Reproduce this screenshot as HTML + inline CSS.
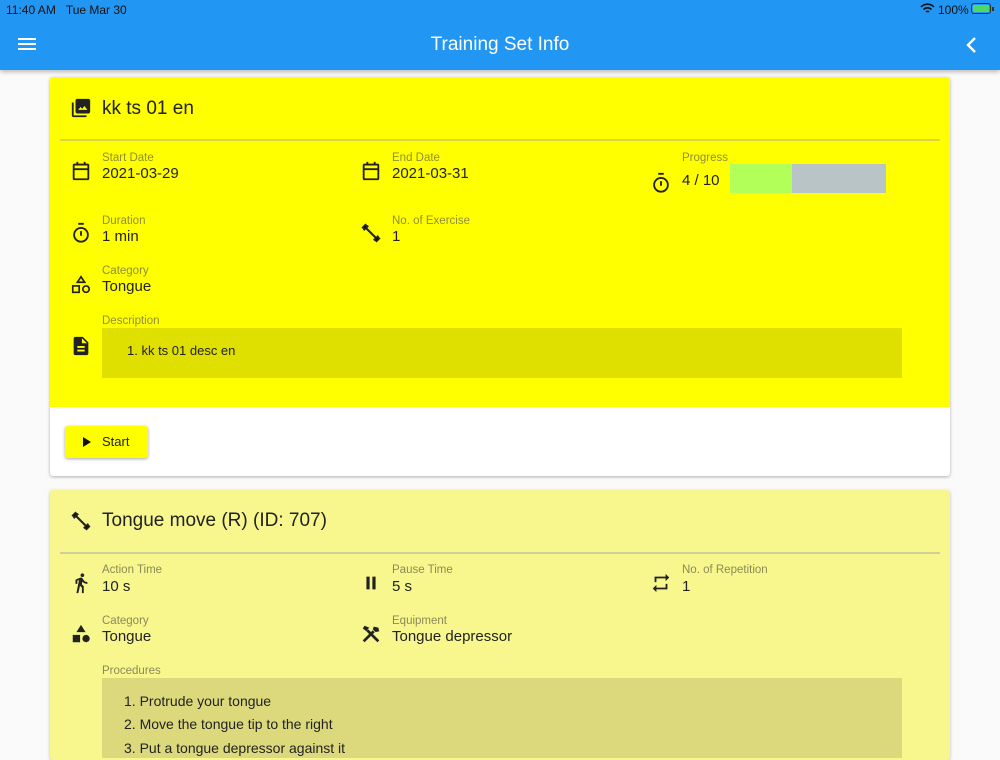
<!DOCTYPE html>
<html><head><meta charset="utf-8"><style>
*{margin:0;padding:0;box-sizing:border-box}
body{width:1000px;height:750px;overflow:hidden;background:#fafafa;font-family:"Liberation Sans",sans-serif;position:relative;color:#222}
.abs{position:absolute}
.bar{left:0;top:0;width:1000px;height:70px;background:#2196f3;box-shadow:0 2px 4px rgba(0,0,0,.25)}
.lbl{position:absolute;font-size:11.5px;color:#8f8f35;white-space:nowrap}
.lbl2{color:#8a8a58}
.val{position:absolute;font-size:15px;color:#222;white-space:nowrap}
svg.ic{position:absolute;width:22px;height:22px}
</style></head><body>
<div class="abs bar"></div>
<div class="abs" style="left:6px;top:3px;font-size:12px;color:#111">11:40 AM&nbsp;&nbsp;&nbsp;Tue Mar 30</div>
<div class="abs" style="left:938px;top:3px;font-size:12px;color:#111">100%</div>
<svg class="abs" style="left:920px;top:3px" width="15" height="12" viewBox="0 0 15 12"><path d="M1 4a9 9 0 0 1 13 0M3.5 6.5a5.5 5.5 0 0 1 8 0M6 9a2 2 0 0 1 3 0" stroke="#111" stroke-width="1.6" fill="none"/></svg>
<div class="abs" style="left:971px;top:3px;width:20px;height:11px;border:1px solid #333;border-radius:3px;padding:1px"><div style="width:100%;height:100%;background:#4cd964;border-radius:1px"></div></div>
<div class="abs" style="left:992px;top:7px;width:2px;height:4px;background:#333"></div>
<svg class="abs" style="left:18px;top:37px" width="18" height="14"><path d="M0 2h18M0 7h18M0 12h18" stroke="#fff" stroke-width="2"/></svg>
<div class="abs" style="left:0;width:1000px;top:34px;text-align:center;color:#fff;font-size:19px">Training Set Info</div>
<svg class="abs" style="left:964px;top:36px" width="14" height="18"><path d="M11 2L4 9l7 7" stroke="#fff" stroke-width="2.4" fill="none"/></svg>

<div class="abs" style="left:50px;top:77px;width:900px;height:399px;background:#fff;border-radius:3px;box-shadow:0 1px 3px rgba(0,0,0,.3);overflow:hidden">
<div class="abs" style="left:0;top:0;width:900px;height:330px;background:#ffff00"></div>
<div class="abs" style="left:10px;top:62px;width:880px;height:2px;background:#d6d64a"></div>
</div>
<svg class="ic" style="left:70px;top:97px" viewBox="0 0 24 24"><path d="M4 6H2v14c0 1.1.9 2 2 2h14v-2H4V6zm16-4H8c-1.1 0-2 .9-2 2v12c0 1.1.9 2 2 2h12c1.1 0 2-.9 2-2V4c0-1.1-.9-2-2-2zm-1 12H9l2.5-3.2 1.8 2.2 2.5-3.2L19 14z" fill="#222"/></svg>
<div class="val" style="left:102px;top:98px;font-size:19px">kk ts 01 en</div>

<svg class="ic" style="left:70px;top:160px" viewBox="0 0 24 24"><rect x="4" y="5" width="16" height="16" rx="1" stroke="#222" stroke-width="2" fill="none"/><path d="M4 10h16M8 2v4M16 2v4" stroke="#222" stroke-width="2"/></svg>
<div class="lbl" style="left:102px;top:152px">Start Date</div><div class="val" style="left:102px;top:165px">2021-03-29</div>
<svg class="ic" style="left:360px;top:160px" viewBox="0 0 24 24"><rect x="4" y="5" width="16" height="16" rx="1" stroke="#222" stroke-width="2" fill="none"/><path d="M4 10h16M8 2v4M16 2v4" stroke="#222" stroke-width="2"/></svg>
<div class="lbl" style="left:392px;top:152px">End Date</div><div class="val" style="left:392px;top:165px">2021-03-31</div>
<svg class="ic" style="left:650px;top:172px" viewBox="0 0 24 24"><circle cx="12" cy="14" r="7.5" stroke="#222" stroke-width="2" fill="none"/><path d="M9 2h6M12 10v5" stroke="#222" stroke-width="2"/></svg>
<div class="lbl" style="left:682px;top:152px">Progress</div><div class="val" style="left:682px;top:172px">4 / 10</div>
<div class="abs" style="left:730px;top:164px;width:62px;height:29px;background:#b2ff59"></div>
<div class="abs" style="left:792px;top:164px;width:94px;height:29px;background:#b8c4c6"></div>

<svg class="ic" style="left:70px;top:222px" viewBox="0 0 24 24"><circle cx="12" cy="14" r="7.5" stroke="#222" stroke-width="2" fill="none"/><path d="M9 2h6M12 10v5" stroke="#222" stroke-width="2"/></svg>
<div class="lbl" style="left:102px;top:215px">Duration</div><div class="val" style="left:102px;top:228px">1 min</div>
<svg class="ic" style="left:360px;top:222px" viewBox="0 0 24 24"><path d="M6 6l12 12" stroke="#222" stroke-width="2.2"/><path d="M3 6l3-3 2 2-3 3zM16 19l3-3 2 2-3 3zM4 9l5-5M15 20l5-5" stroke="#222" stroke-width="2"/></svg>
<div class="lbl" style="left:392px;top:215px">No. of Exercise</div><div class="val" style="left:392px;top:228px">1</div>

<svg class="ic" style="left:70px;top:274px" viewBox="0 0 24 24"><path d="M12 3l4 6H8z" stroke="#222" stroke-width="1.8" fill="none"/><rect x="3" y="13" width="7" height="7" stroke="#222" stroke-width="1.8" fill="none"/><circle cx="17.5" cy="16.5" r="3.5" stroke="#222" stroke-width="1.8" fill="none"/></svg>
<div class="lbl" style="left:102px;top:265px">Category</div><div class="val" style="left:102px;top:278px">Tongue</div>

<div class="lbl" style="left:102px;top:315px">Description</div>
<div class="abs" style="left:102px;top:328px;width:800px;height:50px;background:#dfdf00"></div>
<div class="val" style="left:127px;top:343px;font-size:13px">1. kk ts 01 desc en</div>
<svg class="ic" style="left:70px;top:335px" viewBox="0 0 24 24"><path d="M14 2H6c-1.1 0-2 .9-2 2v16c0 1.1.9 2 2 2h12c1.1 0 2-.9 2-2V8l-6-6zm2 16H8v-2h8v2zm0-4H8v-2h8v2zm-3-5V3.5L18.5 9H13z" fill="#222"/></svg>

<div class="abs" style="left:65px;top:426px;width:83px;height:32px;background:#ffff00;border-radius:3px;box-shadow:0 1px 3px rgba(0,0,0,.35)"></div>
<svg class="abs" style="left:82px;top:436px" width="10" height="12"><path d="M1 1l8 5-8 5z" fill="#111"/></svg>
<div class="val" style="left:102px;top:434px;font-size:13px">Start</div>

<div class="abs" style="left:50px;top:490px;width:900px;height:270px;background:#f7f78d;border-radius:3px;box-shadow:0 1px 3px rgba(0,0,0,.25)">
<div class="abs" style="left:10px;top:62px;width:880px;height:2px;background:#cfcf98"></div>
</div>
<svg class="ic" style="left:70px;top:510px" viewBox="0 0 24 24"><path d="M6 6l12 12" stroke="#222" stroke-width="2.2"/><path d="M3 6l3-3 2 2-3 3zM16 19l3-3 2 2-3 3zM4 9l5-5M15 20l5-5" stroke="#222" stroke-width="2"/></svg>
<div class="val" style="left:102px;top:510px;font-size:19px">Tongue move (R) (ID: 707)</div>

<svg class="ic" style="left:70px;top:572px" viewBox="0 0 24 24"><path d="M13.5 5.5c1.1 0 2-.9 2-2s-.9-2-2-2-2 .9-2 2 .9 2 2 2zM9.8 8.9L7 23h2.1l1.8-8 2.1 2v6h2v-7.5l-2.1-2 .6-3C14.8 12 16.8 13 19 13v-2c-1.9 0-3.5-1-4.3-2.4l-1-1.6c-.4-.6-1-1-1.7-1-.3 0-.5.1-.8.1L6 8.3V13h2V9.6l1.8-.7" fill="#222"/></svg>
<div class="lbl lbl2" style="left:102px;top:564px">Action Time</div><div class="val" style="left:102px;top:578px">10 s</div>
<svg class="ic" style="left:360px;top:572px" viewBox="0 0 24 24"><path d="M7 5h3.5v14H7zM13.5 5H17v14h-3.5z" fill="#222"/></svg>
<div class="lbl lbl2" style="left:392px;top:564px">Pause Time</div><div class="val" style="left:392px;top:578px">5 s</div>
<svg class="ic" style="left:650px;top:572px" viewBox="0 0 24 24"><path d="M7 7h10v3l4-4-4-4v3H5v6h2V7zm10 10H7v-3l-4 4 4 4v-3h12v-6h-2v4z" fill="#222"/></svg>
<div class="lbl lbl2" style="left:682px;top:564px">No. of Repetition</div><div class="val" style="left:682px;top:578px">1</div>

<svg class="ic" style="left:70px;top:623px" viewBox="0 0 24 24"><path d="M12 2l5 8H7z" fill="#222"/><rect x="3" y="13" width="8" height="8" fill="#222"/><circle cx="17.5" cy="17" r="4" fill="#222"/></svg>
<div class="lbl lbl2" style="left:102px;top:615px">Category</div><div class="val" style="left:102px;top:628px">Tongue</div>
<svg class="ic" style="left:360px;top:623px" viewBox="0 0 24 24"><path d="M4 20L15 9M20 20L8 8" stroke="#222" stroke-width="3"/><path d="M5 3l5 2-3 4-4-3zM15 4l5 1 1 4-4 1-3-3z" fill="#222"/></svg>
<div class="lbl lbl2" style="left:392px;top:615px">Equipment</div><div class="val" style="left:392px;top:628px">Tongue depressor</div>

<div class="lbl lbl2" style="left:102px;top:665px">Procedures</div>
<div class="abs" style="left:102px;top:678px;width:800px;height:80px;background:#dcd97c"></div>
<div class="val" style="left:124px;top:693px;font-size:14px">1. Protrude your tongue</div>
<div class="val" style="left:124px;top:716px;font-size:14px">2. Move the tongue tip to the right</div>
<div class="val" style="left:124px;top:740px;font-size:14px">3. Put a tongue depressor against it</div>
</body></html>
